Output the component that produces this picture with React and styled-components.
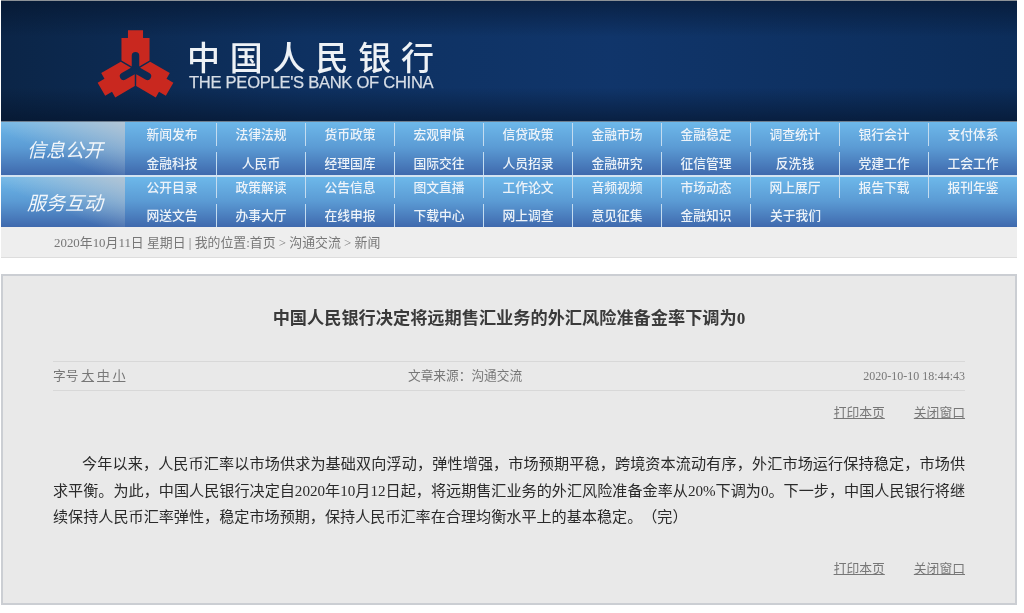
import styled, { createGlobalStyle } from "styled-components";

const serif = `"Liberation Serif", "Noto Sans CJK SC", serif`;

const GlobalStyle = createGlobalStyle`
  html, body { margin: 0; padding: 0; background: #fff; }
  body { font-family: ${serif}; text-spacing-trim: space-all; }
  a { color: inherit; }
`;

// ==================== PAGE ====================
const Page = styled.div`
  width: 1016px;
  margin-left: 1px;
  filter: blur(0.3px);
`;

// ==================== BANNER ====================
const Banner = styled.header`
  box-sizing: border-box;
  height: 122px;
  display: flex;
  align-items: flex-start;
  padding: 24px 0 0 90px;
  border-top: 1px solid #8d9297;
  border-bottom: 1px solid #6f7f90;
  background:
    linear-gradient(180deg, rgba(4, 18, 40, 0.55) 0%, rgba(4, 18, 40, 0) 30%, rgba(4, 18, 40, 0) 72%, rgba(4, 18, 40, 0.6) 100%),
    linear-gradient(90deg, #0b2547 0%, #0e3161 30%, #10356a 60%, #0c2d5a 100%);
`;

const Emblem = styled.svg`
  width: 89px;
  height: 89px;
  flex: none;
`;

const Wordmark = styled.div`
  display: flex;
  flex-direction: column;
  margin: 13px 0 0 7px;
  color: #eef2f6;
`;

const WordmarkCn = styled.div`
  font-family: "Noto Sans CJK SC", sans-serif;
  font-size: 33px;
  font-weight: 500;
  line-height: 36px;
  letter-spacing: 9.8px;
  white-space: nowrap;
`;

const WordmarkEn = styled.div`
  font-family: "Liberation Sans", Arial, sans-serif;
  font-size: 16.6px;
  line-height: 19px;
  margin: -1px 0 0 2px;
  letter-spacing: -0.3px;
  color: #d7dee7;
  -webkit-text-stroke: 0.25px #d7dee7;
  white-space: nowrap;
`;

// ==================== NAVIGATION ====================
const Band = styled.nav`
  display: grid;
  grid-template-columns: 124px 1fr;
  background: linear-gradient(180deg, #6db8ea 0%, #5b9bd4 48%, #3f69ad 100%);
  border-bottom: ${(p) => (p.$first ? "2px solid #d3e3f1" : "0")};
`;

const BandLabel = styled.div`
  display: flex;
  align-items: center;
  justify-content: center;
  padding: 0 0 1px 4px;
  color: #f2f6fa;
  font-family: "Noto Sans CJK SC", sans-serif;
  font-size: 19px;
  font-style: italic;
  background: linear-gradient(to bottom left, rgba(195, 200, 208, 0.8) 0%, rgba(195, 200, 208, 0) 60%);
`;

const BandLinks = styled.div`
  display: grid;
  grid-template-columns: repeat(9, 89px) 88px;
  grid-template-rows: ${(p) => p.$rows};
  row-gap: 6px;
  padding: ${(p) => p.$pad}px 0 0 3px;
`;

const NavItem = styled.a`
  display: flex;
  align-items: center;
  justify-content: center;
  padding-bottom: 2px;
  color: #edf3f9;
  font-family: ${serif};
  font-size: 12.8px;
  font-weight: 500;
  white-space: nowrap;
  border-right: ${(p) => (p.$end ? "0" : "1px solid #c4dcf0")};
`;

// ==================== BREADCRUMB ====================
const Crumb = styled.div`
  box-sizing: border-box;
  height: 31px;
  display: flex;
  align-items: center;
  padding: 0 0 2px 53px;
  background: #eeeeee;
  border-bottom: 1px solid #dddddd;
  color: #777;
  font-size: 12.9px;
  white-space: pre;
`;

// ==================== ARTICLE ====================
const Article = styled.article`
  box-sizing: border-box;
  height: 331px;
  margin-top: 16px;
  padding: 0 50px;
  background: #e9e9e9;
  border: 2px solid #cbced3;
`;

const Title = styled.h1`
  box-sizing: border-box;
  margin: 0;
  height: 85px;
  padding-bottom: 4px;
  display: flex;
  align-items: center;
  justify-content: center;
  color: #3a3a3a;
  font-size: 17.2px;
  font-weight: 700;
  white-space: nowrap;
`;

const Meta = styled.div`
  box-sizing: border-box;
  height: 30px;
  display: grid;
  grid-template-columns: 355px auto 1fr;
  align-items: center;
  border-top: 1px solid #d8d8d8;
  border-bottom: 1px solid #d8d8d8;
  color: #777;
  font-size: 12.7px;
  line-height: 16px;
`;

const SizePicker = styled.div`
  display: flex;
  gap: 3px;
`;

const SizeOption = styled.a`
  text-decoration: underline;
`;

const MetaDate = styled.div`
  text-align: right;
  font-size: 12px;
`;

const Tools = styled.div`
  display: flex;
  justify-content: flex-end;
  gap: 29px;
  margin-top: ${(p) => p.$top}px;
  color: #777;
  font-size: 12.8px;
  line-height: 16px;
`;

const ToolLink = styled.a`
  text-decoration: underline;
`;

const Body = styled.p`
  margin: 30px 0 0;
  color: #2a2a2a;
  font-size: 15.12px;
  line-height: 26.5px;
  text-align: justify;
  text-indent: 29px;
`;

// ==================== DATA ====================
const informationLinks = [
  "新闻发布", "法律法规", "货币政策", "宏观审慎", "信贷政策", "金融市场", "金融稳定", "调查统计", "银行会计", "支付体系",
  "金融科技", "人民币", "经理国库", "国际交往", "人员招录", "金融研究", "征信管理", "反洗钱", "党建工作", "工会工作",
];

const serviceLinks = [
  "公开目录", "政策解读", "公告信息", "图文直播", "工作论文", "音频视频", "市场动态", "网上展厅", "报告下载", "报刊年鉴",
  "网送文告", "办事大厅", "在线申报", "下载中心", "网上调查", "意见征集", "金融知识", "关于我们",
];

const ARM =
  "M-22 -115 H22 V-92 H41 V-26 L11 -9 V-40 A11 11 0 0 0 -11 -40 V-9 L-41 -26 V-92 H-22 Z";

const BankEmblem = () => (
  <Emblem viewBox="-130 -130 260 260">
    {[0, 120, 240].map((angle) => (
      <path key={angle} d={ARM} fill="#c9281f" transform={`rotate(${angle})`} />
    ))}
  </Emblem>
);

const NavBand = ({ label, links, rows, pad, first }) => (
  <Band $first={first}>
    <BandLabel>{label}</BandLabel>
    <BandLinks $rows={rows} $pad={pad}>
      {links.map((text, i) => (
        <NavItem key={text} $end={i === 9 || i === links.length - 1}>
          {text}
        </NavItem>
      ))}
    </BandLinks>
  </Band>
);

const PageTools = ({ top }) => (
  <Tools $top={top}>
    <ToolLink>打印本页</ToolLink>
    <ToolLink>关闭窗口</ToolLink>
  </Tools>
);

// ==================== MAIN COMPONENT ====================
const App = () => (
  <Page>
    <GlobalStyle />
    <Banner>
      <BankEmblem />
      <Wordmark>
        <WordmarkCn>中国人民银行</WordmarkCn>
        <WordmarkEn>THE PEOPLE'S BANK OF CHINA</WordmarkEn>
      </Wordmark>
    </Banner>

    <NavBand first label="信息公开" links={informationLinks} rows="23px 23px" pad={1} />
    <NavBand label="服务互动" links={serviceLinks} rows="21px 23px" pad={0} />

    <Crumb>2020年10月11日 星期日 | 我的位置:首页 &gt; 沟通交流 &gt; 新闻</Crumb>

    <Article>
      <Title>中国人民银行决定将远期售汇业务的外汇风险准备金率下调为0</Title>
      <Meta>
        <SizePicker>
          <span>字号</span>
          <SizeOption>大</SizeOption>
          <SizeOption>中</SizeOption>
          <SizeOption>小</SizeOption>
        </SizePicker>
        <span>文章来源：沟通交流</span>
        <MetaDate>2020-10-10 18:44:43</MetaDate>
      </Meta>
      <PageTools top={14} />
      <Body>
        今年以来，人民币汇率以市场供求为基础双向浮动，弹性增强，市场预期平稳，跨境资本流动有序，外汇市场运行保持稳定，市场供求平衡。为此，中国人民银行决定自2020年10月12日起，将远期售汇业务的外汇风险准备金率从20%下调为0。下一步，中国人民银行将继续保持人民币汇率弹性，稳定市场预期，保持人民币汇率在合理均衡水平上的基本稳定。（完）
      </Body>
      <PageTools top={30} />
    </Article>
  </Page>
);

export default App;
